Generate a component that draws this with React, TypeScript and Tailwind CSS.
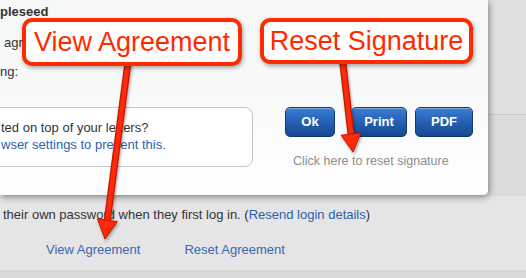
import React from "react";

const font = { fontFamily: '"Liberation Sans", Arial, Helvetica, sans-serif' };

function Arrow({ x1, y1, tip, left, right }: { x1: number; y1: number; tip: [number, number]; left: [number, number]; right: [number, number] }) {
  const bx = (left[0] + right[0]) / 2;
  const by = (left[1] + right[1]) / 2;
  return (
    <g style={{ filter: "drop-shadow(1px 2px 1.5px rgba(0,0,0,0.35))" }}>
      <line x1={x1} y1={y1} x2={bx} y2={by} stroke="#c81400" strokeWidth={7} />
      <line x1={x1} y1={y1} x2={bx} y2={by} stroke="#ff2a0a" strokeWidth={4.5} />
      <polygon points={`${left[0]},${left[1]} ${right[0]},${right[1]} ${tip[0]},${tip[1]}`} fill="#ff2a0a" stroke="#c81400" strokeWidth={1} strokeLinejoin="round" />
    </g>
  );
}

function Btn({ label, w, ml }: { label: string; w: string; ml: string }) {
  return (
    <div
      className={`${w} ${ml} h-[30px] flex items-center justify-center rounded-[5px] border border-[#0f3a78] bg-gradient-to-b from-[#3b7fd4] via-[#2560b3] to-[#164891] text-white font-bold text-[13px] shadow-[inset_0_1px_0_rgba(255,255,255,0.35)]`}
    >
      {label}
    </div>
  );
}

export default function App() {
  return (
    <div className="relative w-[526px] h-[278px] overflow-hidden bg-[#e5e5e5] text-[#333]" style={font}>
      {/* top region: modal + backdrop */}
      <div className="flex items-start h-[196px]">
        <div className="relative z-10 w-[488px] h-[195px] shrink-0 flex flex-col rounded-br-[5px] bg-gradient-to-b from-[#f6f7f7] via-[#f8f9f9] to-white shadow-[1px_2px_7px_rgba(0,0,0,0.45)] text-[13px]">
          <div className="pt-[4px] leading-[16px] font-bold">pleseed</div>
          <div className="mt-[15px] leading-[16px] pl-[4px]">agr</div>
          <div className="mt-[13px] leading-[16px]">ng:</div>
          <div className="mt-[27px] flex items-start">
            <div className="-ml-[12px] w-[265px] h-[60px] shrink-0 rounded-[8px] border border-[#c6c6c6] bg-white pt-[11px] pl-[12px] leading-[17px] whitespace-nowrap">
              <div className="text-[#333]">ted on top of your letters?</div>
              <div className="text-[#2d5fae]">wser settings to prevent this.</div>
            </div>
            <div className="ml-[32px] flex flex-col">
              <div className="flex">
                <Btn label="Ok" w="w-[50px]" ml="ml-0" />
                <Btn label="Print" w="w-[56px]" ml="ml-[16px]" />
                <Btn label="PDF" w="w-[58px]" ml="ml-[8px]" />
              </div>
              <div className="mt-[16px] ml-[8px] leading-[16px] text-[12.5px] text-[#8c8c8c] whitespace-nowrap">
                Click here to reset signature
              </div>
            </div>
          </div>
        </div>
        <div className="flex-1 h-[196px] flex flex-col">
          <div className="h-[115px] bg-[#e0e0e0] border-b border-[#c9c9c9]" />
          <div className="flex-1 bg-[#dcdcdc]" />
        </div>
      </div>

      {/* lower page */}
      <div className="h-[74px] pt-[11px] text-[13px] leading-[16px]">
        <div className="pl-[3px] whitespace-nowrap">
          their own password when they first log in. (<span className="text-[#2d5fae]">Resend login details</span>)
        </div>
        <div className="mt-[19px] flex text-[#3b66b0]">
          <span className="ml-[46px]">View Agreement</span>
          <span className="ml-[44px]">Reset Agreement</span>
        </div>
      </div>
      <div className="h-[8px] bg-[#d9d9d9]" />

      {/* annotation arrows */}
      <svg className="absolute inset-0 z-20 pointer-events-none" width={526} height={278} viewBox="0 0 526 278">
        <Arrow x1={128} y1={62} tip={[105, 239]} left={[97.4, 218.8]} right={[117.3, 221.5]} />
        <Arrow x1={342.5} y1={60} tip={[353, 152]} left={[341.1, 135.2]} right={[360.9, 133]} />
      </svg>

      {/* callouts */}
      <div className="absolute z-30 left-[22px] top-[18px] w-[220px] h-[48px] rounded-[10px] border-[4px] border-[#ff2a00] bg-white shadow-[1px_2px_4px_rgba(0,0,0,0.35)] flex items-center justify-center text-[27px] text-[#ff2a00] leading-none whitespace-nowrap">
        View Agreement
      </div>
      <div className="absolute z-30 left-[260px] top-[18px] w-[213px] h-[46px] rounded-[10px] border-[4px] border-[#ff2a00] bg-white shadow-[1px_2px_4px_rgba(0,0,0,0.35)] flex items-center justify-center text-[27px] text-[#ff2a00] leading-none whitespace-nowrap">
        Reset Signature
      </div>
    </div>
  );
}
